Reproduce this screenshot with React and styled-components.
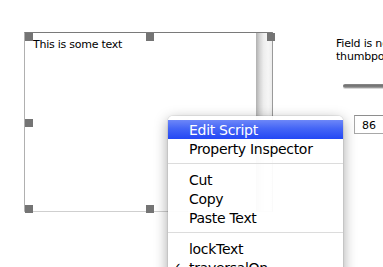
import styled, { createGlobalStyle } from "styled-components";

const GlobalStyle = createGlobalStyle`
  html, body {
    margin: 0;
    padding: 0;
    background: #ffffff;
    overflow: hidden;
  }
  body {
    font-family: "DejaVu Sans", "Liberation Sans", sans-serif;
    color: #000;
  }
`;

const menuItems = [
  { label: "Edit Script", active: true },
  { label: "Property Inspector" },
  { separator: true },
  { label: "Cut" },
  { label: "Copy" },
  { label: "Paste Text" },
  { separator: true },
  { label: "lockText" },
  { label: "traversalOn", checked: true },
];

const handles = [
  { left: 0, top: 0 },
  { left: 121, top: 0 },
  { left: 242, top: 0 },
  { left: 0, top: 86 },
  { left: 0, top: 172 },
  { left: 121, top: 172 },
];

export default function App() {
  return (
    <>
      <GlobalStyle />
      <Page>
        <Field>
          <FieldText>This is some text</FieldText>
          <Scrollbar />
          {handles.map((h, i) => (
            <Handle key={i} style={{ left: h.left, top: h.top }} />
          ))}
        </Field>
        <Inspector>
          <Note>
            Field is not locked
            <br />
            thumbposition
          </Note>
          <SliderTrack />
          <NumberBox>86</NumberBox>
        </Inspector>
        <Menu>
          {menuItems.map((item, i) =>
            item.separator ? (
              <Separator key={i} />
            ) : (
              <MenuItem key={i} $active={item.active}>
                <Check>{item.checked ? "✓" : ""}</Check>
                {item.label}
              </MenuItem>
            )
          )}
        </Menu>
      </Page>
    </>
  );
}

const Page = styled.div`
  position: relative;
  display: flex;
  align-items: flex-start;
  width: 383px;
  height: 267px;
  padding: 32px 0 0 24px;
  box-sizing: border-box;
  overflow: hidden;
`;

const Field = styled.div`
  position: relative;
  flex: none;
  display: flex;
  width: 249px;
  height: 180px;
  box-sizing: border-box;
  border-top: 1px solid #7a7a7a;
  border-left: 1px solid #b0b0b0;
  border-bottom: 1px solid #cfcfcf;
  border-right: 1px solid #9a9a9a;
  background: #fff;
`;

const FieldText = styled.div`
  flex: 1;
  padding: 5px 0 0 8px;
  font-size: 11px;
  line-height: 13px;
  letter-spacing: -0.25px;
`;

const Scrollbar = styled.div`
  width: 15px;
  height: 100%;
  border-left: 1px solid #b5b5b5;
  background: linear-gradient(
    to right,
    #b9b9b9 0%,
    #d6d6d6 20%,
    #eeeeee 45%,
    #f6f6f6 75%,
    #ececec 100%
  );
`;

const Handle = styled.div`
  position: absolute;
  width: 8px;
  height: 8px;
  background: #747474;
`;

const Inspector = styled.div`
  flex: none;
  display: flex;
  flex-direction: column;
  margin-left: 63px;
  padding-top: 5px;
  width: 120px;
`;

const Note = styled.div`
  font-size: 11px;
  line-height: 13px;
  letter-spacing: -0.2px;
  white-space: nowrap;
`;

const SliderTrack = styled.div`
  margin: 21px 0 0 7px;
  height: 4px;
  border-radius: 2px;
  background: linear-gradient(#8a8a8a, #6e6e6e 50%, #a8a8a8);
  box-shadow: 0 1px 0 #d8d8d8;
`;

const NumberBox = styled.div`
  margin: 27px 0 0 18px;
  height: 19px;
  box-sizing: border-box;
  border: 1px solid #a8a8a8;
  border-top-color: #8e8e8e;
  padding: 3px 0 0 7px;
  font-size: 11px;
  line-height: 13px;
`;

const Menu = styled.div`
  position: absolute;
  left: 168px;
  top: 116px;
  width: 175px;
  height: 170px;
  padding-top: 4px;
  box-sizing: border-box;
  background: rgba(255, 255, 255, 0.95);
  border-radius: 5px 5px 0 0;
  box-shadow: 0 4px 14px rgba(0, 0, 0, 0.38), 0 0 0 1px rgba(0, 0, 0, 0.06);
`;

const MenuItem = styled.div`
  display: flex;
  align-items: center;
  height: 19px;
  font-size: 14px;
  letter-spacing: -0.3px;
  white-space: nowrap;
  color: ${(p) => (p.$active ? "#fff" : "#000")};
  background: ${(p) =>
    p.$active
      ? "linear-gradient(#6d87f8 0%, #4465f6 45%, #2347f4 100%)"
      : "transparent"};
`;

const Check = styled.span`
  width: 21px;
  flex: none;
  padding-left: 3px;
  box-sizing: border-box;
  font-size: 13px;
`;

const Separator = styled.div`
  height: 1px;
  margin: 5px 0 6px;
  background: #dcdcdc;
`;
